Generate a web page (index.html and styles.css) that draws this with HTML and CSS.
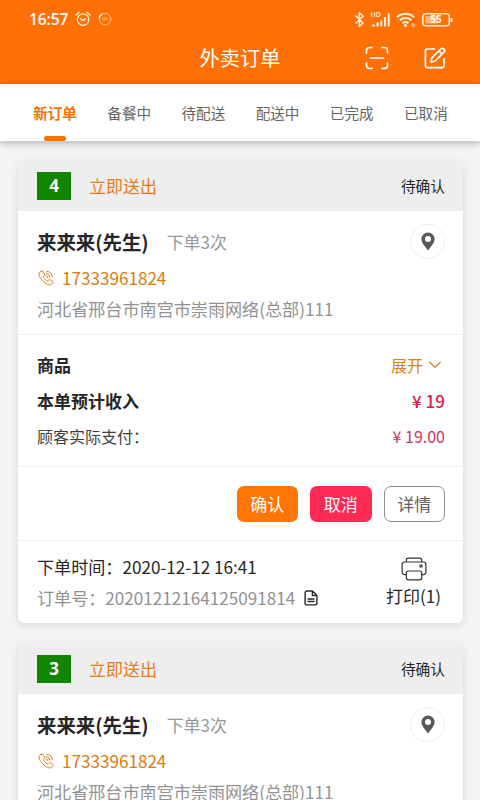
FILE: index.html
```html
<!DOCTYPE html>
<html lang="zh-CN">
<head>
<meta charset="utf-8">
<title>外卖订单</title>
<link rel="stylesheet" href="styles.css">
</head>
<body>
<svg class="sprite" width="0" height="0">
  <symbol id="phone" viewBox="0 0 18 18"><path d="M4.200 2.200 2.700 3.400C.9 5.200 3 9 5.800 11.900c3 3 6.800 5.200 8.700 3.300l1.200-1.300c.6-.7.4-1.300-.3-1.800l-2-1.300c-.7-.4-1.200-.3-1.700.2l-.8.800c-.5.400-1.400-.2-2.800-1.600C6.700 8.800 6 7.900 6.500 7.300l.8-.8c.5-.5.5-1 .1-1.700L6.200 2.700c-.5-.9-1.200-1.100-2-.5zM9.300 4.700c2 .1 3.300 1.500 3.500 3.400M9.800 2.300c3.200.1 5.300 2.400 5.400 5.600M9 6.900c1.100 0 1.700.6 1.800 1.700"/></symbol>
  <symbol id="pin" viewBox="0 0 14 19"><path fill-rule="evenodd" d="M7 .5a6.600 6.600 0 0 0-6.600 6.600C.4 11 4 14.500 7 18.500c3-4 6.600-7.500 6.600-11.400A6.600 6.600 0 0 0 7 .5zm0 3.600a3 3 0 1 1 0 6 3 3 0 0 1 0-6z"/></symbol>
</svg>

<header class="header">
  <div class="status">
    <span class="clock">16:57</span>
    <svg class="alarm" width="16" height="16" viewBox="0 0 16 16"><circle cx="8" cy="8.600" r="5.700"/><path d="M5.400 7.500 8 9.600l2.500-1.900M1 4 4 1.300M15 4l-3-2.700"/></svg>
    <svg class="ring" width="14" height="14" viewBox="0 0 14 14"><circle cx="7" cy="7" r="5.800"/><path class="arc" d="M1.300 6A6 6 0 0 1 4 2.100"/><path d="M4.500 6.200h5M4.500 7.800h5"/></svg>
    <svg class="signals" width="100" height="22" viewBox="0 0 100 22">
      <path class="line" d="m3 8 7 7-3.700 3.500V4.800L10 8l-7 7"/>
      <text class="hd" x="17.500" y="8.500">HD</text>
      <path class="bars" d="M19 18.500h3v-2h-3zM23.500 18.500h2.300v-4h-2.300zM27.300 18.500h2v-6h-2zM31 18.500h2V9h-2zM34.700 18.500h2V5.500h-2z"/>
      <path class="wifi" d="M44 9.200a12.500 12.500 0 0 1 17 0M46.800 12.300a8.500 8.500 0 0 1 11.400 0M49.500 15.200a4.600 4.600 0 0 1 6 0"/><circle class="bars" cx="52.500" cy="17.500" r="1.500"/>
      <circle class="tiny" cx="60" cy="17.300" r="1.500"/>
      <rect class="line" x="69.800" y="5.800" width="26.500" height="12" rx="3"/>
      <rect class="charge" x="72" y="8" width="13" height="7.600" rx="1"/><path class="bars" d="M97.500 10h2v4h-2z"/>
      <text class="pct" x="83" y="15.400">55</text>
    </svg>
  </div>
  <div class="titlebar">
    <h1>外卖订单</h1>
    <div class="tools">
      <svg width="24" height="24" viewBox="0 0 24 24"><path d="M1.500 7V4.500a3 3 0 0 1 3-3H7M17 1.500h2.500a3 3 0 0 1 3 3V7M22.500 17v2.500a3 3 0 0 1-3 3H17M7 22.500H4.500a3 3 0 0 1-3-3V17M5.500 12h13"/></svg>
      <svg width="22" height="22" viewBox="0 0 22 22"><path d="M10.500 2H3a1.600 1.600 0 0 0-1.600 1.600V19A1.600 1.600 0 0 0 3 20.600h15.400A1.600 1.600 0 0 0 20 19v-7.500M7 15.200l.8-4.300 8.900-8.900c1-.9 2.400-.7 3.200.1.800.9 1 2.200.1 3.100L11.200 14zM15 3.800l3.300 3.300"/></svg>
    </div>
  </div>
</header>

<nav class="tabs">
  <a class="tab active">新订单</a>
  <a class="tab">备餐中</a>
  <a class="tab">待配送</a>
  <a class="tab">配送中</a>
  <a class="tab">已完成</a>
  <a class="tab">已取消</a>
</nav>

<main class="orders">
  <article class="card">
    <div class="card-head"><span class="num">4</span><span class="mode">立即送出</span><span class="state">待确认</span></div>
    <section class="customer">
      <div class="info">
        <div class="person"><strong>来来来(先生)</strong><span>下单3次</span></div>
        <div class="phone"><svg width="18" height="18"><use href="#phone"/></svg>17333961824</div>
        <div class="address">河北省邢台市南宫市崇雨网络(总部)111</div>
      </div>
      <div class="locate"><svg width="14" height="19"><use href="#pin"/></svg></div>
    </section>
    <section class="bill">
      <div class="row goods"><b>商品</b><span class="expand">展开<svg width="12" height="8" viewBox="0 0 12 8"><path d="m.7 1.200 5.300 5 5.300-5"/></svg></span></div>
      <div class="row income"><b>本单预计收入</b><b class="total">¥ 19</b></div>
      <div class="row paid"><span>顾客实际支付：</span><span class="price">¥ 19.00</span></div>
    </section>
    <section class="actions">
      <button class="btn confirm">确认</button>
      <button class="btn cancel">取消</button>
      <button class="btn detail">详情</button>
    </section>
    <section class="foot">
      <div class="meta">
        <div class="time">下单时间：2020-12-12 16:41</div>
        <div class="serial">订单号：20201212164125091814<svg width="14" height="16" viewBox="0 0 14 16"><path d="M8.500 1H3a1.900 1.900 0 0 0-1.900 1.900V13A1.900 1.900 0 0 0 3 14.900h8a1.900 1.900 0 0 0 1.900-1.900V5.300zM8.400 1.200v4.300h4.300M4 9h6M4 11.500h6"/></svg></div>
      </div>
      <div class="print">
        <svg width="26" height="24" viewBox="0 0 26 24"><path d="M5.300 5V3.300A2.200 2.200 0 0 1 7.500 1.100h11a2.200 2.200 0 0 1 2.200 2.200V5M5.300 17.600H3.600a2.500 2.500 0 0 1-2.500-2.500V7.500A2.500 2.500 0 0 1 3.600 5h18.800a2.500 2.500 0 0 1 2.500 2.500v7.600a2.500 2.500 0 0 1-2.500 2.500h-1.700"/><rect x="5.300" y="14" width="15.400" height="8.800" rx="2"/><circle cx="20" cy="9" r="1.200"/></svg>
        <span>打印(1)</span>
      </div>
    </section>
  </article>

  <article class="card">
    <div class="card-head"><span class="num">3</span><span class="mode">立即送出</span><span class="state">待确认</span></div>
    <section class="customer">
      <div class="info">
        <div class="person"><strong>来来来(先生)</strong><span>下单3次</span></div>
        <div class="phone"><svg width="18" height="18"><use href="#phone"/></svg>17333961824</div>
        <div class="address">河北省邢台市南宫市崇雨网络(总部)111</div>
      </div>
      <div class="locate"><svg width="14" height="19"><use href="#pin"/></svg></div>
    </section>
  </article>
</main>
</body>
</html>
```
FILE: styles.css
```css
* { box-sizing: border-box; }
body {
  margin: 0;
  width: 480px;
  height: 800px;
  overflow: hidden;
  background: #f4f4f6;
  color: #262629;
  font: 17px/24px "Noto Sans CJK SC", "Noto Sans", sans-serif;
}
svg { display: block; fill: none; flex: none; stroke-linecap: round; stroke-linejoin: round; }
.sprite { position: absolute; }

.header { height: 84px; background: #ff7106; color: #fff; }
.status { display: flex; align-items: center; height: 38px; padding: 0 27px 0 29px; }
.clock { font: 600 15.5px/20px "Open Sans", sans-serif; letter-spacing: -.1px; width: 46px; white-space: nowrap; }
.alarm { stroke: #fff3d5; stroke-width: 1.3; }
.ring { margin-left: 7px; stroke: #ffc48a; stroke-width: .8; }
.ring .arc { stroke: #fff; stroke-width: 1.4; }
.signals { margin-left: auto; }
.signals .line, .wifi { stroke: #fff0d8; stroke-width: 1.5; }
.signals .wifi { stroke-width: 2; stroke-linecap: butt; }
.bars { fill: #fff0d8; }
.tiny { stroke: #ffdcb0; stroke-width: 1; }
.charge { fill: #ffb475; }
.hd { fill: #fff0d8; font: 600 7px "Open Sans", sans-serif; }
.pct { fill: #fff; font: 700 10px "Open Sans", sans-serif; text-anchor: middle; }
.titlebar { display: grid; grid-template-columns: 1fr auto 1fr; align-items: center; height: 39px; }
.titlebar h1 { grid-column: 2; margin: 0; font-size: 20.2px; line-height: 28px; font-weight: 400; }
.tools { display: flex; align-items: center; justify-content: flex-end; gap: 35px; padding-right: 34px; }
.tools svg { stroke: #fff; stroke-width: 1.7; }

.tabs {
  display: grid;
  grid-template-columns: repeat(6, 1fr);
  height: 57px;
  padding: 0 17px 0 18px;
  background: #fff;
  box-shadow: 0 2px 8px rgba(0, 0, 0, .28);
}
.tab {
  display: flex;
  flex-direction: column;
  align-items: center;
  padding-top: 17px;
  color: #666669;
  font-size: 14.6px;
  white-space: nowrap;
}
.active { color: #f57404; font-weight: 700; }
.active::after { content: ""; width: 22px; height: 5px; margin-top: 11px; border-radius: 2.5px; background: #f87000; }

.orders { display: flex; flex-direction: column; gap: 21px; padding: 20px 17px 0 18px; }
.card { background: #fff; border-radius: 7px; box-shadow: 0 2px 9px rgba(0, 0, 0, .12); overflow: hidden; }
.card-head { display: flex; align-items: center; height: 50px; padding: 0 18px 0 19px; background: #eee; }
.num { width: 34px; height: 28px; background: #128500; color: #fff; text-align: center; font: 700 17px/28px "Open Sans", sans-serif; }
.mode { margin-left: 18px; color: #e67d1c; }
.state { margin-left: auto; font-size: 14.7px; }

.customer { display: flex; justify-content: space-between; height: 124px; padding: 13px 18px 0 19px; border-bottom: 1px solid #f0f0f2; }
.person { display: flex; align-items: center; height: 36px; gap: 18px; }
.person strong { font-size: 19.4px; font-weight: 700; }
.person span { font-size: 17px; color: #97979a; }
.phone { display: flex; align-items: center; gap: 7px; height: 36px; font-size: 17.1px; color: #df7a13; }
.phone svg { stroke: #df7a13; stroke-width: 1; }
.address { height: 28px; line-height: 26px; font-size: 17.1px; color: #929295; white-space: nowrap; }
.locate { display: flex; align-items: center; justify-content: center; width: 35px; height: 35px; border: 1px solid #ececf2; border-radius: 50%; }
.locate svg { fill: #58585c; }

.bill { height: 132px; padding: 12px 18px 0 19px; border-bottom: 1px solid #f0f0f2; }
.row { display: flex; align-items: center; justify-content: space-between; height: 36px; }
.row b { font-weight: 700; }
.expand { display: flex; align-items: center; gap: 6px; padding-right: 4px; font-size: 16px; color: #d98322; }
.expand svg { stroke: #d98322; stroke-width: 1.2; }
.row .total { color: #dc1c48; font-weight: 500; }
.paid { height: 34px; font-size: 16px; color: #3f3f42; }
.price { color: #c9385c; }

.actions { display: flex; justify-content: flex-end; gap: 12px; height: 74px; padding: 19px 18px 0; border-bottom: 1px solid #f0f0f2; }
.btn { width: 61.5px; height: 36px; padding: 0; border: 0; border-radius: 7px; color: #fff; font: inherit; }
.confirm { background: #ff7606; }
.cancel { background: #ff2b55; }
.detail { background: #fff; color: #626266; border: 1px solid #8e8e92; }

.foot { display: flex; justify-content: space-between; height: 82px; padding: 10px 22px 0 19px; }
.time, .serial { height: 31px; line-height: 31px; font-size: 17.1px; white-space: nowrap; }
.serial { display: flex; align-items: center; gap: 9px; color: #919194; }
.serial svg { stroke: #29292c; stroke-width: 1.4; }
.print { display: flex; flex-direction: column; align-items: center; padding-top: 6px; }
.print svg { stroke: #333336; stroke-width: 1.2; }
.print span { margin-top: 3px; }
```
